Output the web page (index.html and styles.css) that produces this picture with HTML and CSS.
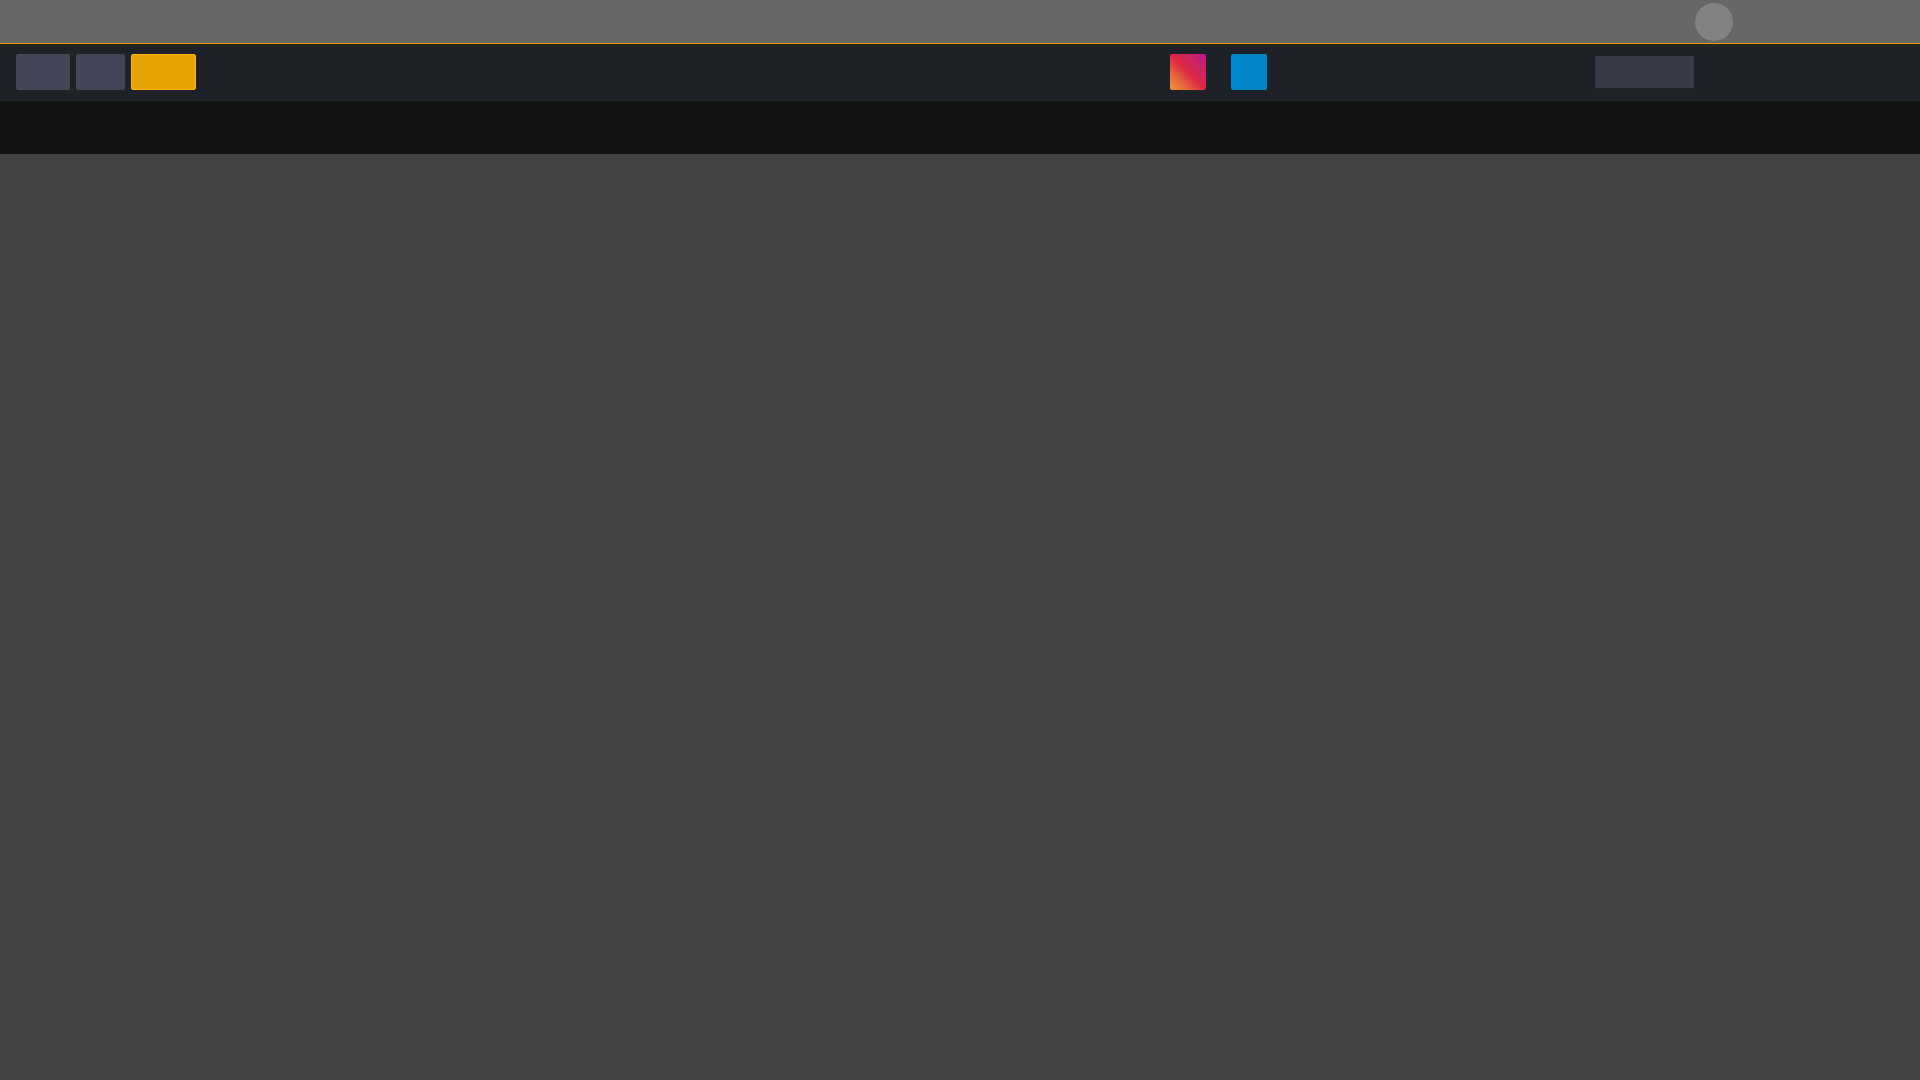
FILE: index.html
```
<!DOCTYPE html>
<html lang="en">
<head>
  <meta charset="UTF-8" />
  <meta name="viewport" content="width=device-width, initial-scale=1.0"/>
  <title>Home</title>
  <link rel="stylesheet" href="styles.css">
</head>
<body>
  <header class="topbar">
    <button class="avatar" type="button" aria-label="Account"></button>
  </header>
  <nav class="toolbar">
    <div class="actions">
      <button class="btn btn-login" type="button" aria-label="Log in"></button>
      <button class="btn btn-help" type="button" aria-label="Help"></button>
      <button class="btn btn-register" type="button" aria-label="Register"></button>
    </div>
    <div class="social">
      <a class="social-link instagram" href="#" aria-label="Instagram"></a>
      <a class="social-link telegram" href="#" aria-label="Telegram"></a>
    </div>
    <button class="language" type="button" aria-label="Language"></button>
  </nav>
  <div class="subnav"></div>
  <main class="content"></main>
</body>
</html>
```

FILE: styles.css
```
* {
  box-sizing: border-box;
}
body {
  margin: 0;
  min-height: 100vh;
  display: flex;
  flex-direction: column;
  font-family: Roboto, sans-serif;
  background: #424242;
}
button {
  padding: 0;
  border: none;
  cursor: pointer;
}
.topbar {
  display: flex;
  align-items: center;
  justify-content: flex-end;
  height: 44px;
  padding-right: 187px;
  background: #676767;
  border-bottom: 1px solid #e6a200;
}
.avatar {
  width: 38px;
  height: 38px;
  border-radius: 50%;
  background: #828282;
}
.toolbar {
  display: flex;
  align-items: center;
  height: 57px;
  padding: 0 226px 0 16px;
  background: #1e2128;
  border-bottom: 1px solid #242426;
  box-shadow: inset 0 3px 0 #252527;
}
.actions {
  display: flex;
  gap: 6px;
}
.btn {
  height: 36px;
  border-radius: 2px;
  background: #424655;
}
.btn-login {
  width: 54px;
}
.btn-help {
  width: 49px;
}
.btn-register {
  width: 65px;
  background: #e6a200;
  border: 1px solid #ffb60f;
}
.social {
  display: flex;
  gap: 25px;
  margin-left: auto;
  margin-right: 328px;
}
.social-link {
  width: 36px;
  height: 36px;
  border-radius: 2px;
}
.instagram {
  background: linear-gradient(45deg, #f09433 0%, #e6683c 25%, #dc2743 50%, #cc2366 75%, #bc1888 100%);
}
.telegram {
  background: #0088cc;
}
.language {
  width: 99px;
  height: 32px;
  border-radius: 2px;
  background: #353b46;
  box-shadow: 0 1px 1px #24262b;
}
.subnav {
  height: 53px;
  background: #131313;
}
.content {
  flex: 1;
}
```
